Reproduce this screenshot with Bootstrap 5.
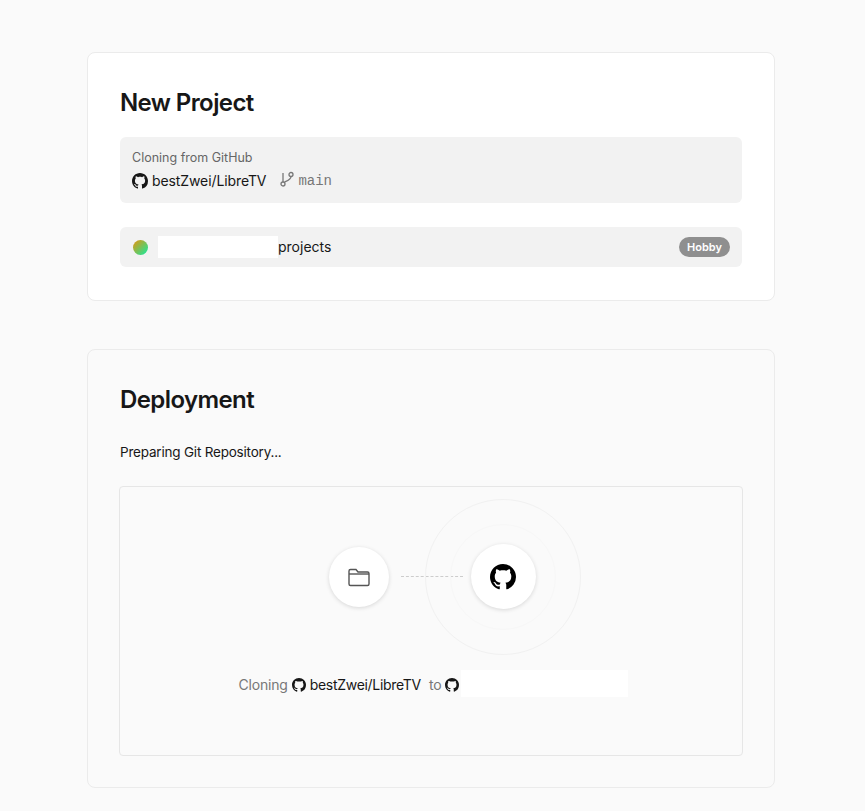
<!DOCTYPE html>
<html lang="en">
<head>
  <meta charset="UTF-8">
  <title>New Project</title>
  <link href="https://cdn.jsdelivr.net/npm/bootstrap@5.3.3/dist/css/bootstrap.min.css" rel="stylesheet">
  <style>
    body { background: #fafafa; font-family: Inter, "Liberation Sans", sans-serif; color: #171717; font-size: 14px; }
    .page-wrap { width: 688px; margin-left: 87px; padding-top: 52px; }
    .panel-box { border: 1px solid #ebebeb; border-radius: 8px; padding: 33px 32px; }
    .panel-white { background: #fff; height: 249px; margin-bottom: 48px; }
    .panel-grey { background: #fafafa; height: 439px; }
    .panel-title { font-size: 24px; line-height: 34px; font-weight: 600; letter-spacing: -.6px; margin: 0; }
    .source-box { background: #f2f2f2; border-radius: 6px; height: 66px; margin-top: 17px; padding: 12px; }
    .source-label { font-size: 12.5px; line-height: 17px; color: #666; }
    .source-row { font-size: 14px; line-height: 20px; margin-top: 5px; letter-spacing: -.1px; }
    .branch-icon { margin: 0 3px 4px 13px; }
    .branch-name { font-family: "Liberation Mono", monospace; font-size: 14px; color: #777; letter-spacing: 0; }
    .team-box { background: #f2f2f2; border-radius: 6px; height: 40px; margin-top: 24px; padding: 0 12px 0 13px; }
    .team-dot { width: 15px; height: 15px; border-radius: 50%; background: linear-gradient(135deg, #c9a020 15%, #2fe08c 85%); }
    .hidden-name { width: 120px; height: 22px; background: #fff; margin-left: 10px; }
    .team-label { margin-top: -1px; }
    .hobby-pill { background: #8f8f8f; color: #fff; font-size: 11px; font-weight: 600; line-height: 20px; border-radius: 10px; padding: 0 8px; }
    .status-line { line-height: 20px; font-size: 13.5px; margin-top: 25px; letter-spacing: -.2px; }
    .clone-area { border: 1px solid #e6e6e6; border-radius: 4px; width: 624px; height: 270px; margin: 24px 0 0 -1px; padding: 56px 0 0 2px; }
    .node-row { height: 67px; }
    .node-circle { background: #fff; border-radius: 50%; box-shadow: 0 1px 4px rgba(0,0,0,.14); position: relative; z-index: 1; }
    .node-folder { width: 60px; height: 60px; }
    .node-github { width: 65px; height: 65px; }
    .node-line { width: 62px; border-top: 1px dashed #ccc; margin: 0 8px 0 12px; }
    .ring-holder { position: relative; }
    .ring-a, .ring-b { position: absolute; border-radius: 50%; border: 1px solid #f1f1f1; left: 50%; top: 50%; transform: translate(-50%, -50%); }
    .ring-a { width: 156px; height: 156px; }
    .ring-b { width: 106px; height: 106px; border-color: #f7f7f7; }
    .clone-caption { margin: 59px 0 0 3px; padding-top: 2px; height: 29px; font-size: 14px; letter-spacing: -.2px; }
    .clone-caption .muted-word { color: #777; }
    .repo-word { letter-spacing: -.3px; }
    .hidden-target { width: 167px; height: 27px; background: #fff; margin: -2px 0 0 -2px; }
  </style>
</head>
<body>
  <svg width="0" height="0" class="d-block">
    <symbol id="gh" viewBox="0 0 16 16"><path fill="currentColor" d="M8 0C3.58 0 0 3.58 0 8c0 3.54 2.29 6.53 5.47 7.59.4.07.55-.17.55-.38 0-.19-.01-.82-.01-1.49-2.01.37-2.53-.49-2.69-.94-.09-.23-.48-.94-.82-1.13-.28-.15-.68-.52-.01-.53.63-.01 1.08.58 1.23.82.72 1.21 1.87.87 2.33.66.07-.52.28-.87.51-1.07-1.78-.2-3.64-.89-3.64-3.95 0-.87.31-1.59.82-2.15-.08-.2-.36-1.02.08-2.12 0 0 .67-.21 2.2.82.64-.18 1.32-.27 2-.27.68 0 1.36.09 2 .27 1.53-1.04 2.2-.82 2.2-.82.44 1.1.16 1.92.08 2.12.51.56.82 1.27.82 2.15 0 3.07-1.87 3.75-3.65 3.95.29.25.54.73.54 1.48 0 1.07-.01 1.93-.01 2.2 0 .21.15.46.55.38A8.013 8.013 0 0016 8c0-4.42-3.58-8-8-8z"/></symbol>
  </svg>

  <div class="page-wrap">
    <div class="panel-box panel-white">
      <h1 class="panel-title">New Project</h1>
      <div class="source-box">
        <div class="source-label">Cloning from GitHub</div>
        <div class="source-row d-flex align-items-center">
          <svg width="16" height="16" class="me-1"><use href="#gh"/></svg>
          <span>bestZwei/LibreTV</span>
          <svg width="16" height="16" viewBox="0 0 16 16" fill="none" stroke="#777" stroke-width="1.3" class="branch-icon">
            <circle cx="4" cy="13" r="2"/><circle cx="12" cy="3.5" r="2"/><path d="M4 11V2M12 5.5c0 3-3 4-6.5 5.5"/>
          </svg>
          <span class="branch-name">main</span>
        </div>
      </div>
      <div class="team-box d-flex align-items-center">
        <span class="team-dot"></span>
        <span class="hidden-name"></span>
        <span class="team-label">projects</span>
        <span class="hobby-pill ms-auto">Hobby</span>
      </div>
    </div>

    <div class="panel-box panel-grey">
      <h1 class="panel-title">Deployment</h1>
      <div class="status-line">Preparing Git Repository...</div>
      <div class="clone-area">
        <div class="node-row d-flex align-items-center justify-content-center">
          <div class="node-circle node-folder d-flex align-items-center justify-content-center">
            <svg width="24" height="24" viewBox="0 0 24 24" fill="none" stroke="#555" stroke-width="1.4">
              <path d="M2 19V6a1.500 1.500 0 0 1 1.500-1.500H9l2 2.500h9.500A1.500 1.500 0 0 1 22 8.500V19a1.500 1.500 0 0 1-1.500 1.500h-17A1.500 1.500 0 0 1 2 19z"/><path d="M2 9h20"/>
            </svg>
          </div>
          <div class="node-line"></div>
          <div class="ring-holder">
            <span class="ring-a"></span>
            <span class="ring-b"></span>
            <div class="node-circle node-github d-flex align-items-center justify-content-center">
              <svg width="26" height="26" class="text-black"><use href="#gh"/></svg>
            </div>
          </div>
        </div>
        <div class="clone-caption d-flex align-items-center justify-content-center">
          <span class="muted-word">Cloning</span>
          <svg width="14" height="14" class="mx-1"><use href="#gh"/></svg>
          <span class="repo-word">bestZwei/LibreTV</span>
          <span class="muted-word ms-2">to</span>
          <svg width="14" height="14" class="mx-1"><use href="#gh"/></svg>
          <span class="hidden-target"></span>
        </div>
      </div>
    </div>
  </div>
  <script src="https://cdn.jsdelivr.net/npm/bootstrap@5.3.3/dist/js/bootstrap.bundle.min.js"></script>
</body>
</html>
